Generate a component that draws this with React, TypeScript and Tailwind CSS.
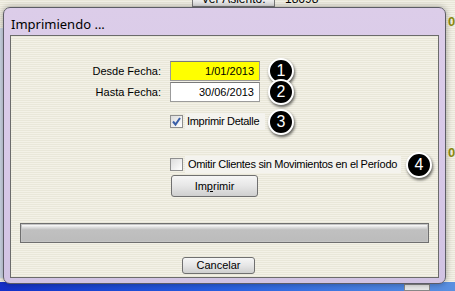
const stripes =
  'bg-[repeating-linear-gradient(to_bottom,#e9e7d9_0px,#e9e7d9_1px,#f3f1e7_1px,#f3f1e7_2px)]';

const Badge = ({ n }: { n: number }) => (
  <div className="h-0 flex items-center">
    <div className="w-[26px] h-[26px] rounded-full bg-black border-2 border-white shadow-[1px_2px_3px_rgba(0,0,0,0.6)] flex items-center justify-center text-white text-[16px] leading-none font-['Liberation_Sans',Arial,sans-serif]">
      {n}
    </div>
  </div>
);

const CheckBox = ({ checked }: { checked?: boolean }) => (
  <div className="w-[13px] h-[13px] border border-[#8f8f8f] bg-gradient-to-br from-[#dcdcdc] to-white flex items-center justify-center">
    {checked && (
      <svg width="11" height="11" viewBox="0 0 11 11">
        <path d="M2 5.5 L4.5 8.5 L9 2" fill="none" stroke="#3a5fa8" strokeWidth="2" />
      </svg>
    )}
  </div>
);

export default function App() {
  return (
    <div className="relative w-[455px] h-[291px] overflow-hidden bg-[#ece9d8] font-['Liberation_Sans',Arial,sans-serif] text-[11px] text-black">
      {/* app behind the dialog */}
      <div className={`absolute inset-0 ${stripes}`} />
      <div className="absolute left-[192px] top-[-8px] w-[83px] h-[15px] border border-[#7a7a7a] bg-gradient-to-b from-white to-[#dedede] text-center text-[12px] leading-[13px]">
        Ver Asiento:
      </div>
      <div className="absolute left-[285px] top-[-7px] text-[12px] leading-[13px]">18698</div>
      <div className="absolute left-[448px] top-[12px] text-[13px] font-bold text-[#8a8a10]">0</div>
      <div className="absolute left-[448px] top-[143px] text-[13px] font-bold text-[#8a8a10]">0</div>
      <div className="absolute left-0 right-0 bottom-0 h-[9px] bg-gradient-to-r from-[#1530c8] via-[#2a60e0] to-[#5a90e0]" />
      <div className="absolute left-[404px] bottom-0 w-[26px] h-[7px] bg-[#e8e8e8] border border-[#888]" />
      <div className="absolute left-0 top-[28px] w-[3px] h-[250px] bg-[#cfd8e8]" />

      {/* dialog window */}
      <div className="absolute left-[3px] top-[7px] w-[443px] h-[277px] rounded-[7px] border border-[#5c5c66] bg-gradient-to-b from-[#dccde9] via-[#d8c9e8] to-[#d1c3e3] shadow-[0_0_6px_rgba(0,0,0,0.35)] flex flex-col">
        <div className="h-[27px] pl-[7px] pt-[7px] text-[13px] font-['Noto_Sans',sans-serif] leading-[18px] text-black">
          Imprimiendo ...
        </div>
        <div className={`mx-[6px] h-[243px] border border-[#6b6b6b] ${stripes} flex flex-col`}>
          <div className="mt-[25px] h-[20px] flex items-center">
            <div className="w-[150px] text-right">Desde Fecha:</div>
            <div className="ml-[9px] w-[90px] h-[20px] border border-[#9b9b9b] border-t-[#7a7a7a] bg-[#ffff00] flex items-center justify-end pr-[5px]">
              1/01/2013
            </div>
            <div className="ml-[8px]">
              <Badge n={1} />
            </div>
          </div>
          <div className="mt-[1px] h-[20px] flex items-center">
            <div className="w-[150px] text-right">Hasta Fecha:</div>
            <div className="ml-[9px] w-[90px] h-[20px] border border-[#9b9b9b] border-t-[#7a7a7a] bg-white flex items-center justify-end pr-[5px]">
              30/06/2013
            </div>
            <div className="ml-[8px]">
              <Badge n={2} />
            </div>
          </div>
          <div className="mt-[11px] h-[17px] ml-[159px] flex items-center">
            <CheckBox checked />
            <div className="ml-[2px] w-[80px] h-[17px] bg-[#f4f3ee] flex items-center pl-[2px] tracking-[-0.3px] whitespace-nowrap">
              Imprimir Detalle
            </div>
            <div className="ml-[3px]">
              <Badge n={3} />
            </div>
          </div>
          <div className="mt-[26px] h-[17px] ml-[159px] flex items-center">
            <CheckBox />
            <div className="ml-[2px] w-[216px] h-[17px] bg-[#f4f3ee] flex items-center pl-[3px] tracking-[-0.3px] whitespace-nowrap">
              Omitir Clientes sin Movimientos en el Período
            </div>
            <div className="ml-[5px]">
              <Badge n={4} />
            </div>
          </div>
          <button className="mt-[2px] ml-[160px] w-[87px] h-[22px] rounded-[3px] border border-[#707070] bg-gradient-to-b from-[#f6f6f6] via-[#e6e6e6] to-[#cfcfcf] text-[11px]">
            Im<span className="underline">p</span>rimir
          </button>
          <div className="mt-[26px] mx-[9px] h-[20px] border border-[#6f6f6f] bg-[#c4c4c4] p-[1px]">
            <div className="h-full bg-gradient-to-b from-[#fafafa] from-0% via-[#c0c0c0] via-30% to-[#bcbcbc]" />
          </div>
          <div className="mt-[14px] flex justify-center pr-[12px]">
            <button className="w-[73px] h-[17px] rounded-[3px] border border-[#707070] bg-gradient-to-b from-[#f6f6f6] via-[#e6e6e6] to-[#cfcfcf] text-[11px] leading-none">
              Cancelar
            </button>
          </div>
        </div>
      </div>
    </div>
  );
}
